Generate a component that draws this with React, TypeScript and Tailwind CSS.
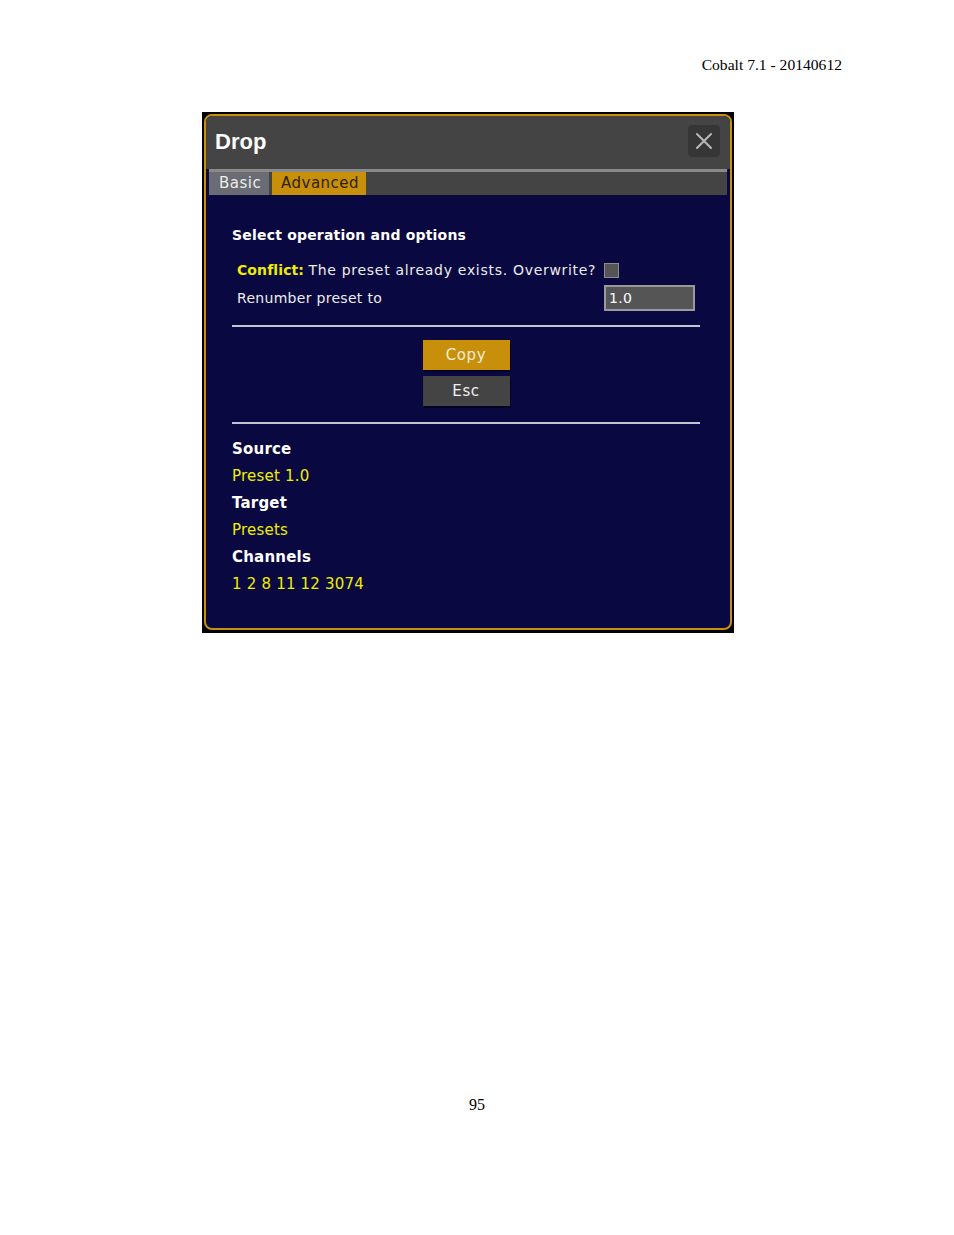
import React from "react";

const dlgFont = { fontFamily: '"DejaVu Sans", "Noto Sans", sans-serif' };

const summary = [
  { label: "Source", value: "Preset 1.0" },
  { label: "Target", value: "Presets" },
  { label: "Channels", value: "1 2 8 11 12 3074" },
];

function CloseIcon() {
  return (
    <svg width="18" height="18" viewBox="0 0 18 18" fill="none">
      <path d="M2 2 L16 16 M16 2 L2 16" stroke="#b8b8b8" strokeWidth="2" strokeLinecap="round" />
    </svg>
  );
}

export default function App() {
  return (
    <div className="relative w-[954px] h-[1235px] bg-white">
      <div
        className="pt-[56px] pr-[112px] text-right text-[15.6px] leading-[18px] text-black"
        style={{ fontFamily: '"Liberation Serif", serif' }}
      >
        Cobalt 7.1 - 20140612
      </div>

      <div className="ml-[202px] mt-[38px] w-[532px] h-[521px] bg-black p-[2px] pb-[3px]">
        <div
          className="w-full h-full rounded-[8px] border-2 border-[#c8900a] overflow-hidden flex flex-col bg-[#0a0840]"
          style={dlgFont}
        >
          {/* title bar */}
          <div className="h-[53px] bg-[#444444] flex items-center justify-between pl-[9px] pr-[10px] pb-[3px]">
            <span
              className="text-white text-[22px] font-bold"
              style={{ fontFamily: '"Liberation Sans", Arial, sans-serif' }}
            >
              Drop
            </span>
            <div className="w-[32px] h-[32px] rounded-[4px] bg-[#363636] flex items-center justify-center">
              <CloseIcon />
            </div>
          </div>

          {/* tabs */}
          <div className="mx-[3px] h-[26px] bg-[#444444] border-t-[3px] border-[#8a8a8a] flex">
            <div className="w-[60px] pl-[10px] bg-[#6b6b73] text-[#ececec] text-[15px] tracking-[0.5px] flex items-center">
              Basic
            </div>
            <div className="ml-[3px] w-[94px] pl-[9px] bg-[#c8900a] text-[#2e2200] text-[15px] tracking-[0.5px] flex items-center">
              Advanced
            </div>
          </div>

          {/* body */}
          <div className="flex-1 pl-[26px] pr-[30px] pt-[28px]">
            <div className="text-white text-[14px] font-bold tracking-[0.2px] leading-[24px]">
              Select operation and options
            </div>

            <div className="pl-[5px] mt-[11px] flex items-center justify-between pr-[81px] text-[14px] leading-[24px] text-[#ececec]">
              <span>
                <span className="font-bold text-[#eeee00] tracking-[0.1px]">Conflict:</span>{" "}
                <span className="tracking-[0.7px]">The preset already exists. Overwrite?</span>
              </span>
              <span className="w-[15px] h-[15px] bg-[#555555] border border-[#8c8c8c]" />
            </div>

            <div className="pl-[5px] mt-[3px] flex items-center justify-between pr-[5px] text-[14px] text-[#ececec] tracking-[0.3px]">
              <span>Renumber preset to</span>
              <div className="w-[91px] h-[26px] bg-[#555555] border-2 border-[#9a9a9a] text-white pl-[3px] flex items-center">
                1.0
              </div>
            </div>

            <div className="mt-[14px] h-[2px] bg-[#c4c4d4]" />

            <div className="flex flex-col items-center gap-[6px] mt-[13px]">
              <div className="w-[87px] h-[30px] bg-[#c8900a] shadow-[1px_2px_0_#05031f] text-[#f4ecd8] text-[15px] tracking-[0.6px] flex items-center justify-center">
                Copy
              </div>
              <div className="w-[87px] h-[30px] bg-[#444444] shadow-[1px_2px_0_#05031f] text-[#f0f0f0] text-[15px] tracking-[0.6px] flex items-center justify-center">
                Esc
              </div>
            </div>

            <div className="mt-[16px] h-[2px] bg-[#c4c4d4]" />

            <div className="mt-[12px] flex flex-col text-[15px] leading-[27px] tracking-[0.2px]">
              {summary.map((row) => (
                <React.Fragment key={row.label}>
                  <span className="font-bold text-white">{row.label}</span>
                  <span className="text-[#eeee00]">{row.value}</span>
                </React.Fragment>
              ))}
            </div>
          </div>
        </div>
      </div>

      <div
        className="absolute top-[1093px] left-0 w-full text-center text-[16px] text-black"
        style={{ fontFamily: '"Liberation Serif", serif' }}
      >
        95
      </div>
    </div>
  );
}
